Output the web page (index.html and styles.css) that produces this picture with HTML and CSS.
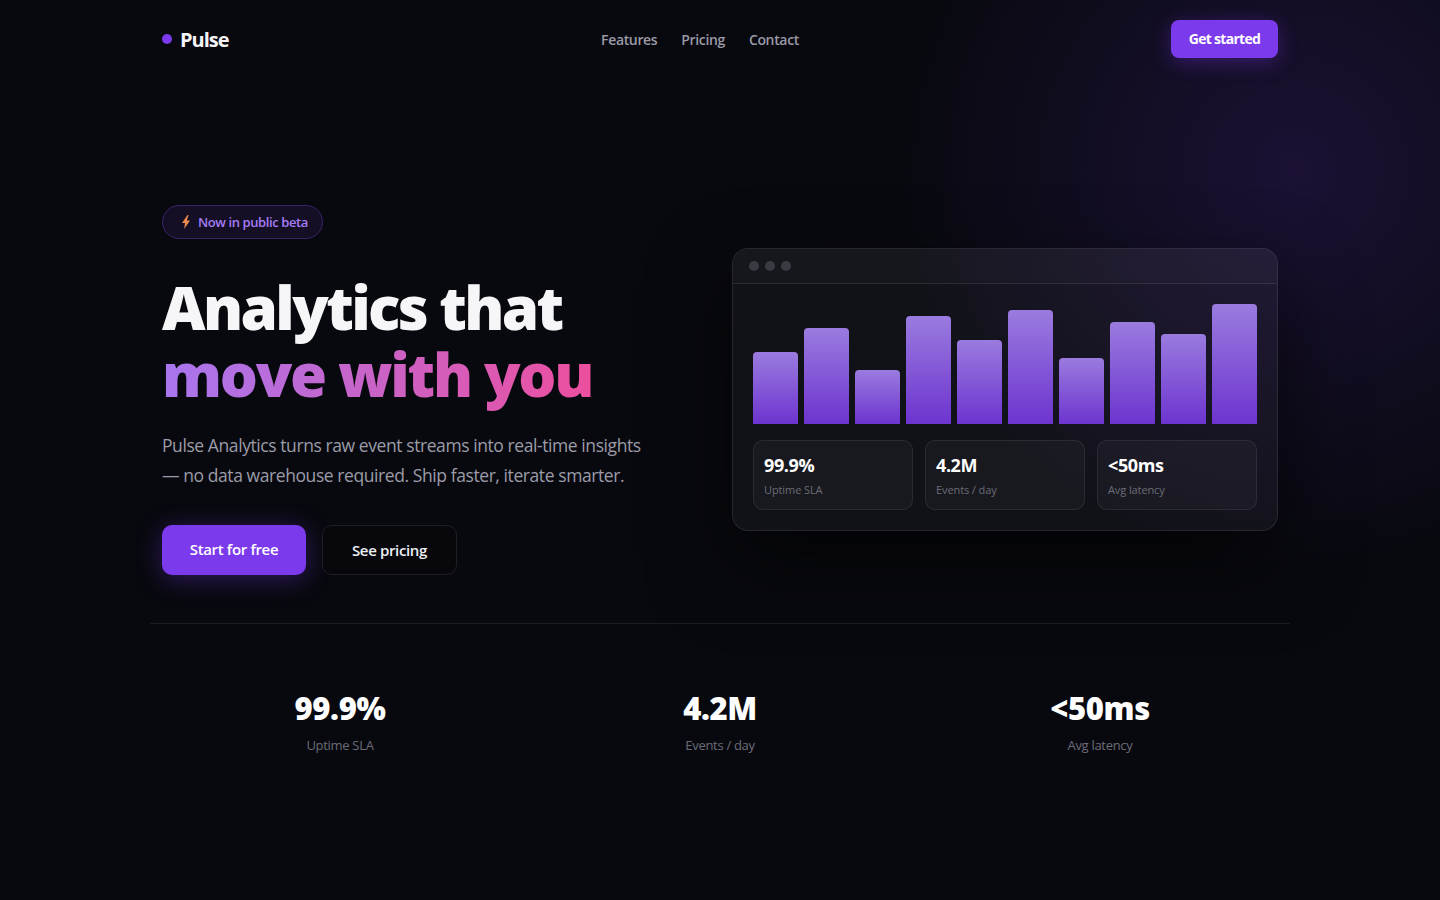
FILE: index.html
```html
<!DOCTYPE html>
<html lang="en">
<head>
    <meta charset="UTF-8">
    <meta name="viewport" content="width=device-width, initial-scale=1.0">
    <title>Pulse Analytics</title>
    <link rel="stylesheet" href="styles.css">
</head>
<body>
    <div class="container">
        <nav class="nav">
            <a class="brand" href="#"><span class="brand-dot"></span>Pulse</a>
            <div class="nav-links">
                <a href="#">Features</a>
                <a href="#">Pricing</a>
                <a href="#">Contact</a>
            </div>
            <a class="nav-cta" href="#">Get started</a>
        </nav>

        <section class="hero">
            <div class="hero-copy">
                <span class="badge">
                    <svg class="badge-icon" width="8" height="14" viewBox="0 0 8 14"><path d="M5.5 0 0 8H3L2.2 14 8 5.5H4.8L6.6 0z" fill="#f08a4b"/></svg>
                    Now in public beta
                </span>
                <h1>Analytics that<br><span class="gradient">move with you</span></h1>
                <p class="lead">Pulse Analytics turns raw event streams into real-time insights — no data warehouse required. Ship faster, iterate smarter.</p>
                <div class="actions">
                    <a class="btn btn-primary" href="#">Start for free</a>
                    <a class="btn btn-ghost" href="#">See pricing</a>
                </div>
            </div>

            <div class="card">
                <div class="card-bar">
                    <span></span><span></span><span></span>
                </div>
                <div class="card-body">
                    <div class="chart">
                        <div class="bar" style="height: 72px"></div>
                        <div class="bar" style="height: 96px"></div>
                        <div class="bar" style="height: 54px"></div>
                        <div class="bar" style="height: 108px"></div>
                        <div class="bar" style="height: 84px"></div>
                        <div class="bar" style="height: 114px"></div>
                        <div class="bar" style="height: 66px"></div>
                        <div class="bar" style="height: 102px"></div>
                        <div class="bar" style="height: 90px"></div>
                        <div class="bar" style="height: 120px"></div>
                    </div>
                    <div class="tiles">
                        <div class="tile"><div class="tile-value">99.9%</div><div class="tile-label">Uptime SLA</div></div>
                        <div class="tile"><div class="tile-value">4.2M</div><div class="tile-label">Events / day</div></div>
                        <div class="tile"><div class="tile-value">&lt;50ms</div><div class="tile-label">Avg latency</div></div>
                    </div>
                </div>
            </div>
        </section>

        <section class="stats">
            <div class="stat"><div class="stat-value">99.9%</div><div class="stat-label">Uptime SLA</div></div>
            <div class="stat"><div class="stat-value">4.2M</div><div class="stat-label">Events / day</div></div>
            <div class="stat"><div class="stat-value">&lt;50ms</div><div class="stat-label">Avg latency</div></div>
        </section>
    </div>
</body>
</html>
```

FILE: styles.css
```css
* {
    box-sizing: border-box;
}
html, body {
    height: 100%;
}
body {
    margin: 0;
    background-color: #08090f;
    background-image: radial-gradient(circle 400px at 1295px 170px, rgba(124, 58, 237, 0.17) 0%, rgba(124, 58, 237, 0) 100%);
    background-repeat: no-repeat;
    color: #fff;
    font-family: "Open Sans", "Noto Sans", Arial, sans-serif;
}
a {
    text-decoration: none;
    color: inherit;
}
.container {
    width: 1140px;
    margin: 0 auto;
}

/* nav */
.nav {
    display: flex;
    justify-content: space-between;
    align-items: center;
    height: 78px;
    padding: 0 12px;
}
.brand {
    display: flex;
    align-items: center;
    gap: 8px;
    width: 67px;
    font-size: 20px;
    font-weight: 700;
    letter-spacing: -1px;
    color: #f4f4f6;
}
.brand-dot {
    flex: none;
    width: 10px;
    height: 10px;
    border-radius: 50%;
    background-color: #7c3aed;
}
.nav-links {
    display: flex;
    gap: 24px;
    font-size: 14px;
    font-weight: 600;
    letter-spacing: -0.35px;
    color: #9a9aa6;
}
.nav-cta {
    display: flex;
    align-items: center;
    justify-content: center;
    width: 107px;
    height: 38px;
    padding-bottom: 2px;
    border-radius: 8px;
    background-color: #7c3aed;
    font-size: 14px;
    font-weight: 700;
    letter-spacing: -0.7px;
    box-shadow: 0 4px 20px rgba(124, 58, 237, 0.35);
}

/* hero */
.hero {
    display: grid;
    grid-template-columns: 546px 546px;
    gap: 24px;
    align-items: center;
    padding: 127px 12px 48px;
    border-bottom: 1px solid #1a1a22;
}
.badge {
    display: inline-flex;
    align-items: center;
    gap: 8px;
    height: 34px;
    padding: 0 14px 0 19px;
    border: 1px solid #3a2367;
    border-radius: 17px;
    background-color: #150f26;
    font-size: 13px;
    font-weight: 600;
    letter-spacing: -0.4px;
    color: #a57cf5;
}
h1 {
    margin: 35px 0 0;
    font-size: 60px;
    font-weight: 800;
    line-height: 67px;
    letter-spacing: -2.6px;
    color: #f6f6f8;
}
.gradient {
    background: linear-gradient(90deg, #a876ef 0%, #ec4f9e 100%);
    -webkit-background-clip: text;
    background-clip: text;
    color: transparent;
    letter-spacing: -2.3px;
}
.lead {
    margin: 22px 0 0;
    width: 490px;
    font-size: 17.5px;
    font-weight: 400;
    line-height: 30px;
    letter-spacing: -0.42px;
    color: #9c9ca8;
}
.actions {
    display: flex;
    gap: 16px;
    margin-top: 35px;
}
.btn {
    display: flex;
    align-items: center;
    justify-content: center;
    height: 50px;
    border-radius: 10px;
    font-size: 15px;
    font-weight: 600;
    letter-spacing: -0.35px;
}
.btn-primary {
    width: 144px;
    padding-bottom: 2px;
    background-color: #7c3aed;
    box-shadow: 0 4px 24px rgba(124, 58, 237, 0.35);
}
.btn-ghost {
    width: 135px;
    border: 1px solid #1e1e26;
    background-color: #07070c;
    color: #eef0f4;
}

/* dashboard card */
.card {
    height: 283px;
    margin-bottom: 1px;
    border: 1px solid rgba(255, 255, 255, 0.09);
    border-radius: 16px;
    background-color: rgba(255, 255, 255, 0.04);
    box-shadow: 0 32px 80px rgba(0, 0, 0, 0.6);
    overflow: hidden;
}
.card-bar {
    display: flex;
    align-items: center;
    gap: 6px;
    height: 35px;
    padding: 0 16px;
    background-color: rgba(255, 255, 255, 0.025);
    border-bottom: 1px solid rgba(255, 255, 255, 0.09);
}
.card-bar span {
    width: 10px;
    height: 10px;
    border-radius: 50%;
    background-color: #3a3a42;
}
.card-body {
    padding: 20px;
}
.chart {
    display: flex;
    align-items: flex-end;
    gap: 6px;
    height: 120px;
}
.bar {
    flex: 1;
    border-radius: 4px 4px 0 0;
    background: linear-gradient(180deg, #9a7bdf 0%, #6d34cf 100%);
}
.tiles {
    display: grid;
    grid-template-columns: repeat(3, 1fr);
    gap: 12px;
    margin-top: 16px;
}
.tile {
    height: 70px;
    padding: 12px 10px;
    border: 1px solid rgba(255, 255, 255, 0.08);
    border-radius: 10px;
    background-color: rgba(255, 255, 255, 0.03);
}
.tile-value {
    font-size: 18px;
    font-weight: 700;
    line-height: 24px;
    letter-spacing: -0.4px;
}
.tile-label {
    margin-top: 5px;
    font-size: 11px;
    line-height: 15px;
    letter-spacing: -0.1px;
    color: #6c6c78;
}

/* stats */
.stats {
    display: grid;
    grid-template-columns: repeat(3, 1fr);
    padding-top: 64px;
    text-align: center;
}
.stat-value {
    font-size: 31px;
    font-weight: 800;
    line-height: 40px;
    letter-spacing: -0.4px;
}
.stat-label {
    margin-top: 8px;
    font-size: 13px;
    line-height: 18px;
    letter-spacing: -0.3px;
    color: #6c6c78;
}
```
